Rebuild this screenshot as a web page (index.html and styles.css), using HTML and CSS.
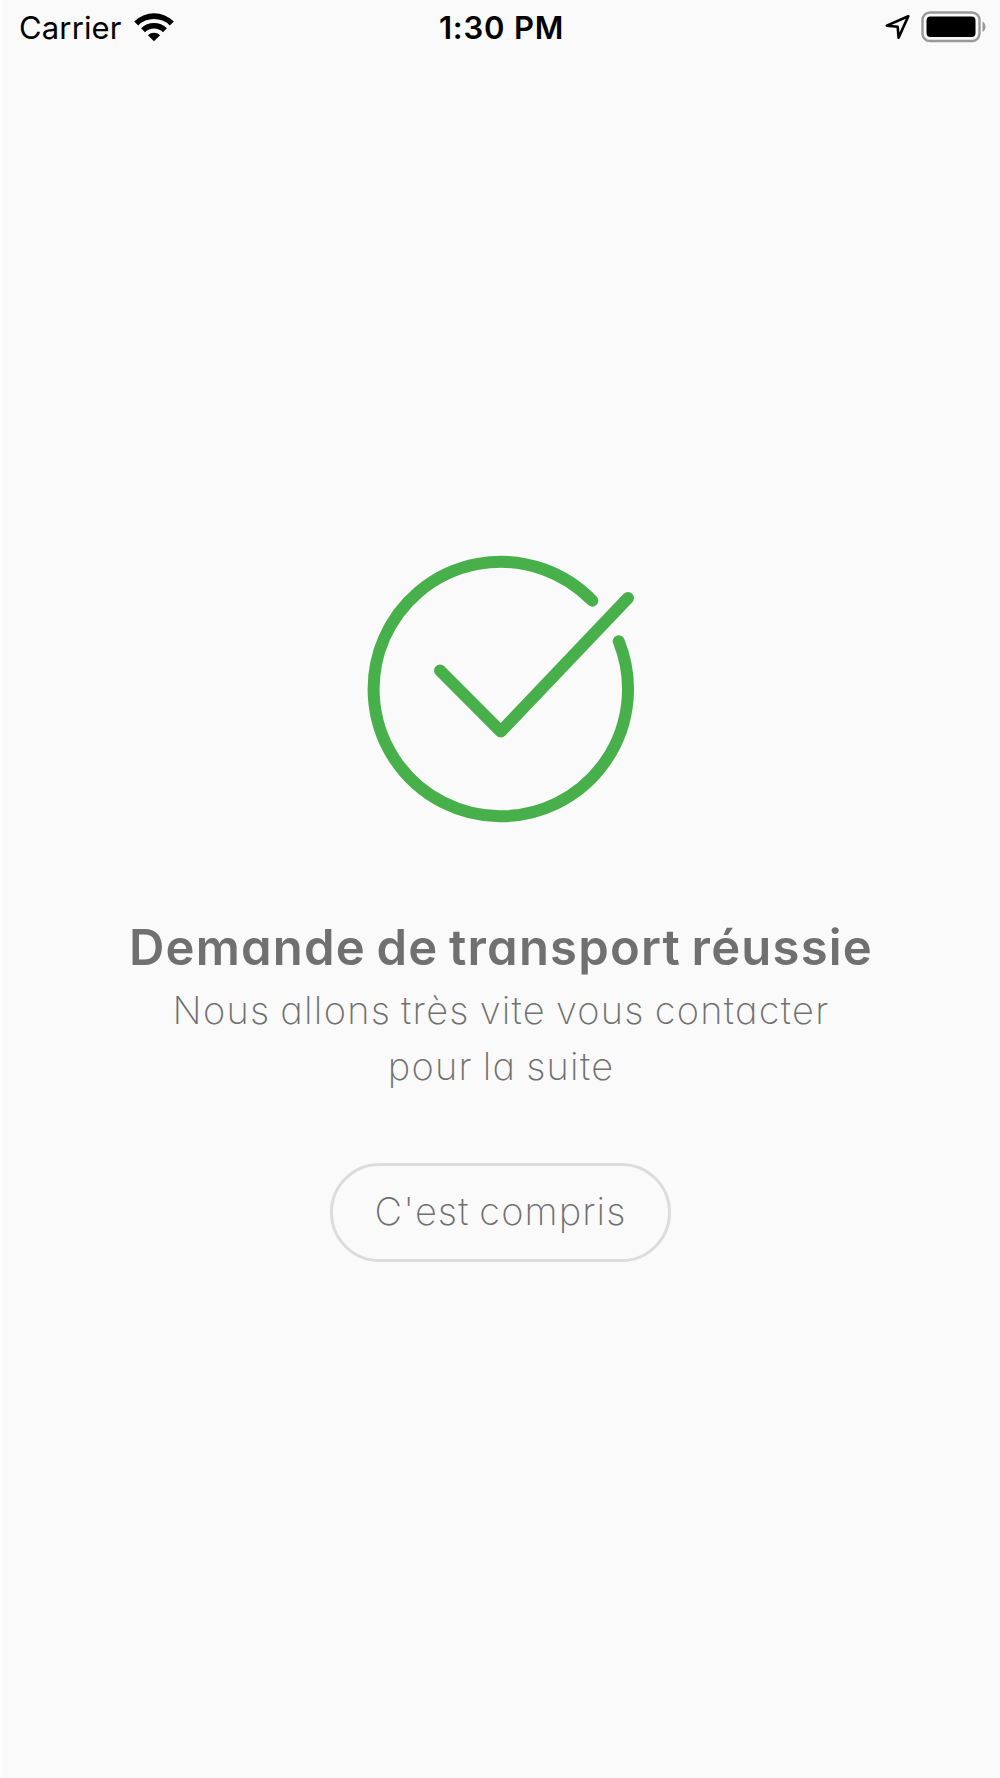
FILE: index.html
```
<!DOCTYPE html>
<html lang="fr">
<head>
<meta charset="UTF-8">
<meta name="viewport" content="width=device-width, initial-scale=1.0">
<title>Demande de transport</title>
<link rel="stylesheet" href="styles.css">
</head>
<body>

<!-- Status bar -->
<header class="status-bar">
    <div class="network">
        <span class="carrier">Carrier</span>
        <svg class="wifi" width="40" height="30" viewBox="0 0 40 30">
            <path d="M20 29.3 L13.9 23.2 A8.8 8.8 0 0 1 26.1 23.2 Z"/>
            <path d="M7.1 16.3 A18.3 18.3 0 0 1 32.9 16.3 L29 20.2 A12.7 12.7 0 0 0 11 20.2 Z"/>
            <path d="M0.2 9.4 A28.2 28.2 0 0 1 39.8 9.4 L35.8 13.4 A22.5 22.5 0 0 0 4.2 13.4 Z"/>
        </svg>
    </div>
    <div class="clock">1:30 PM</div>
    <div class="indicators">
        <svg class="location" width="26" height="26" viewBox="0 0 26 26">
            <path d="M23.3 2.2 L1.8 11.6 L12.7 12.8 L13.6 23.6 Z"/>
        </svg>
        <svg class="battery" width="66" height="32" viewBox="0 0 66 32">
            <rect class="battery-frame" x="1.5" y="1.5" width="57" height="28.5" rx="7.5"/>
            <rect x="5.5" y="5.5" width="49" height="20.5" rx="4"/>
            <path class="battery-tip" d="M61.5 10.5 Q64.5 12.3 64.5 15.8 Q64.5 19.3 61.5 21 Z"/>
        </svg>
    </div>
</header>

<!-- Confirmation -->
<main class="confirmation">
    <svg class="check" width="282" height="282" viewBox="0 0 282 282">
        <path d="M232.3 52.7 A127.2 127.2 0 1 0 258.7 93.3"/>
        <path d="M80 122.6 L140.8 183.5 L268 50"/>
    </svg>
    <h1>Demande de transport réussie</h1>
    <p>Nous allons très vite vous contacter<br>pour la suite</p>
    <button class="confirm-button">C'est compris</button>
</main>

</body>
</html>
```

FILE: styles.css
```
/* Reset */
* {
    box-sizing: border-box;
    margin: 0;
    padding: 0;
}

body {
    height: 1778px;
    background: #fafafa;
    border-left: 2px solid #fff;
    color: #707070;
    font-family: 'Inter', 'Liberation Sans', sans-serif;
    overflow: hidden;
}

/* Status bar */
.status-bar {
    display: grid;
    grid-template-columns: 1fr auto 1fr;
    align-items: center;
    height: 54px;
    padding: 0 13px 0 17px;
    color: #000;
    font-size: 31px;
}

.network, .indicators {
    display: flex;
    align-items: center;
}

.network {
    gap: 12px;
}

.carrier {
    letter-spacing: 0.15px;
}

.indicators {
    justify-content: flex-end;
    gap: 10px;
}

.clock {
    padding-right: 3px;
    font-weight: 600;
    letter-spacing: 0.8px;
}

.wifi {
    margin-bottom: 1px;
}

.location path {
    fill: none;
    stroke: #000;
    stroke-width: 2.6;
    stroke-linejoin: round;
}

.battery-frame {
    fill: none;
    stroke: #999;
    stroke-width: 2.4;
}

.battery-tip {
    fill: #999;
}

/* Confirmation */
.confirmation {
    display: flex;
    flex-direction: column;
    align-items: center;
    padding-top: 494px;
    text-align: center;
}

.check path {
    fill: none;
    stroke: #48b04b;
    stroke-width: 12;
    stroke-linecap: round;
    stroke-linejoin: round;
}

h1 {
    margin-top: 88px;
    font-size: 49px;
    font-weight: 600;
    line-height: 60px;
    letter-spacing: 1.2px;
    word-spacing: -3px;
    white-space: nowrap;
    font-feature-settings: "cv11";
}

p, .confirm-button {
    font-size: 38px;
    font-weight: 250;
    letter-spacing: 1.25px;
    word-spacing: -2px;
    font-feature-settings: "cv11";
}

p {
    margin-top: 4px;
    line-height: 56px;
    white-space: nowrap;
}

.confirm-button {
    width: 341px;
    height: 99px;
    margin: 69px 1px 0 0;
    padding-bottom: 4px;
    background: none;
    border: 3px solid #dcdcdc;
    border-radius: 50px;
    color: #707070;
    font-family: inherit;
    letter-spacing: 1.1px;
    cursor: pointer;
}
```
